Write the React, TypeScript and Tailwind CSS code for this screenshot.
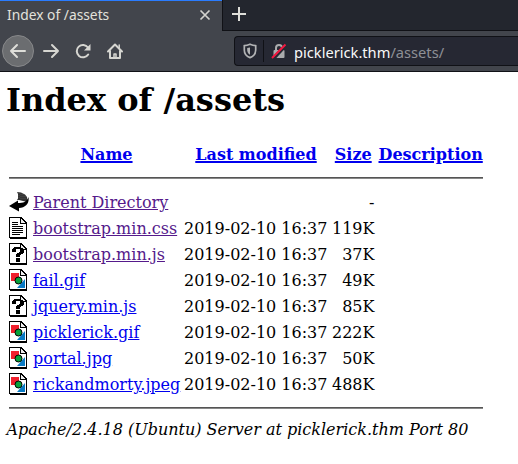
import React from "react";

type Kind = "back" | "text" | "unknown" | "image";

const files: { kind: Kind; name: string; date: string; size: string; visited?: boolean }[] = [
  { kind: "back", name: "Parent Directory", date: "", size: "-", visited: true },
  { kind: "text", name: "bootstrap.min.css", date: "2019-02-10 16:37", size: "119K", visited: true },
  { kind: "unknown", name: "bootstrap.min.js", date: "2019-02-10 16:37", size: "37K", visited: true },
  { kind: "image", name: "fail.gif", date: "2019-02-10 16:37", size: "49K" },
  { kind: "unknown", name: "jquery.min.js", date: "2019-02-10 16:37", size: "85K" },
  { kind: "image", name: "picklerick.gif", date: "2019-02-10 16:37", size: "222K" },
  { kind: "image", name: "portal.jpg", date: "2019-02-10 16:37", size: "50K" },
  { kind: "image", name: "rickandmorty.jpeg", date: "2019-02-10 16:37", size: "488K" },
];

function FileIcon({ kind }: { kind: Kind }) {
  if (kind === "back") {
    return (
      <svg width="20" height="22" viewBox="0 0 20 22" className="block">
        <path d="M8 1L12 1.5L16 3.5L18 6L18.5 9L18 11L10 9L8 9L9 7.5V3Z" fill="#333" />
        <path d="M10 2v6M12 3v5M14 3v5M16 5v3" stroke="#666" strokeWidth=".5" strokeDasharray="1 1" />
        <path d="M19.5 6C20.5 12 17 16.5 10 17V20.5L0 15L9 9.5V12C14 12 18 11 19.5 6Z" fill="#000" />
      </svg>
    );
  }
  return (
    <svg width="20" height="22" viewBox="0 0 20 22" className="block" shapeRendering="crispEdges">
      <path d="M0 0H12L18 6V22H1V21H0Z" fill="#000" />
      <path d="M1 1H12V6H17V20H1Z" fill="#fff" />
      <path d="M11 1h1v5h5v1h-6z" fill="#000" />
      <path d="M12 2h1v1h1v1h1v1h1v1h-4z" fill="#eee" />
      {kind === "text" && (
        <path d="M3 5h6M3 7h6M3 9h11M3 11h11M3 13h11M3 15h11M3 17h8" transform="translate(0 .5)" stroke="#000" />
      )}
      {kind === "unknown" && (
        <path d="M5 4h7v1h2v1h1v4h-1v1h-2v1h-1v2H7v-3h1v-1h2V9h1V6H7v3H3V6h1V5h1zM7 15h4v4H7z" fill="#000" />
      )}
      {kind === "image" && (
        <g shapeRendering="auto">
          <path d="M2 4h8v8H2z" fill="#f0202d" />
          <path d="M16 10v9H8z" fill="#087ac4" />
          <circle cx="9.5" cy="11.5" r="3.5" fill="#08a13b" stroke="#000" strokeWidth="1" />
        </g>
      )}
    </svg>
  );
}

function Chrome() {
  return (
    <header className="h-[72px] bg-[#42454c] font-['Noto_Sans',sans-serif] text-[14.6px]">
      <div className="flex h-[31px]">
        <div className="flex w-[222px] items-start border-t border-[#2a7cff] pl-[7px] pr-[11px] text-[#e2e2dd]">
          <span className="grow text-[13.8px] leading-[28px]">Index of /assets</span>
          <svg className="mt-2" width="12" height="12" viewBox="0 0 12 12" stroke="#d3d3ce" strokeWidth="1.7"><path d="M1.5 1.5l9 9M10.5 1.5l-9 9" /></svg>
        </div>
        <div className="grow border-b border-l border-[#101116] bg-[#23262e] pl-[9px] pt-[7px]">
          <svg width="14" height="14" viewBox="0 0 14 14" stroke="#deded9" strokeWidth="2"><path d="M7 0v14M0 7h14" /></svg>
        </div>
      </div>
      <div className="flex h-[41px] items-center border-b border-[#101116] pl-[2px]">
        <div className="flex size-8 items-center justify-center rounded-full border border-[#87888a] bg-[#6b6d70]">
          <svg width="18" height="16" viewBox="0 0 18 16" fill="none" stroke="#deded9" strokeWidth="2" strokeLinecap="round" strokeLinejoin="round"><path d="M16 8H2M8 2L2 8l6 6" /></svg>
        </div>
        <svg className="ml-2" width="18" height="16" viewBox="0 0 18 16" fill="none" stroke="#d6d6d1" strokeWidth="2" strokeLinecap="round" strokeLinejoin="round"><path d="M2 8h14M10 2l6 6-6 6" /></svg>
        <svg className="ml-[15px]" width="17" height="16" viewBox="0 0 17 16" fill="none" stroke="#d6d6d1" strokeWidth="2" strokeLinecap="round"><path d="M13.2 11.5A6.2 6.2 0 1 1 13 4.5" /><path d="M15.5 1v6.5H9z" fill="#d6d6d1" stroke="none" /></svg>
        <svg className="ml-[14px]" width="18" height="17" viewBox="0 0 18 17" fill="none" stroke="#d6d6d1" strokeWidth="2" strokeLinejoin="round" strokeLinecap="round"><path d="M2 8.5L9 1.5l7 7M4 7.5V15h10V7.5" /><path d="M8 15v-4h2v4" strokeWidth="1.5" /><path d="M13.2 2v3" strokeWidth="1.5" /></svg>
        <div className="ml-[110px] flex h-[30px] grow items-center rounded-l-[4px] border border-r-0 border-[#101116] bg-[#262833] pl-[8px]">
          <svg width="14" height="16" viewBox="0 0 14 16" fill="none" stroke="#b2b3b5" strokeWidth="1.7"><path d="M1.3 2.7Q4 2.4 7 1.2Q10 2.4 12.7 2.7V7C12.7 11 10 13.5 7 14.6C4 13.5 1.3 11 1.3 7Z" /><path d="M7 4.5C6 4.8 5 5 4.2 5.1V7.5C4.4 9.5 5.4 10.8 7 11.7Z" fill="#b2b3b5" stroke="none" /></svg>
          <div className="ml-[6px] h-[22px] w-px bg-[#101116]" />
          <svg className="ml-[7px]" width="16" height="17" viewBox="0 0 16 17" fill="none"><path d="M5 8V5a3 3 0 0 1 6 0v3" stroke="#aaabad" strokeWidth="2" /><rect x="2.5" y="7" width="11" height="8" rx="1" fill="#aaabad" /><path d="M2 16L15 2" stroke="#262833" strokeWidth="3.6" /><path d="M1 15L14.5 1.5" stroke="#f51840" strokeWidth="2" /></svg>
          <span className="ml-[7px] whitespace-nowrap pt-px text-[14.67px] text-[#f9f9fa]">picklerick.thm<span className="text-[#8e9096]">/assets/</span></span>
        </div>
      </div>
    </header>
  );
}

function Rule() {
  return <div className="ml-[9px] h-[2px] w-[474px] border-t border-[#555] bg-[#888]" />;
}

export default function App() {
  const link = "underline text-[#0000ee]";
  const heading = "underline decoration-2 text-[#0000ee]";
  return (
    <div className="h-[464px] w-[518px] overflow-hidden bg-white text-black">
      <Chrome />
      <main className="font-['DejaVu_Serif',serif] text-[16px] leading-[26px]">
        <h1 className="ml-[6px] h-[70px] pt-[9px] text-[32px] font-bold leading-[38px]">Index of /assets</h1>
        <div className="flex h-[35px] whitespace-nowrap font-bold">
          <div className="ml-[33px] w-[147px] text-center"><a className={heading}>Name</a></div>
          <div className="ml-1 w-[144px] text-center"><a className={heading}>Last modified</a></div>
          <div className="ml-1 flex w-[42.5px] justify-center"><a className={heading}>Size</a></div>
          <div className="ml-1"><a className={heading}>Description</a></div>
        </div>
        <Rule />
        <div className="h-[228px] pt-[11px]">
          {files.map((f) => (
            <div key={f.name} className="flex h-[26px] whitespace-nowrap">
              <div className="ml-[9px] w-5 pt-px"><FileIcon kind={f.kind} /></div>
              <div className="ml-1 w-[147px]"><a className={f.visited ? "underline text-[#551a8b]" : link}>{f.name}</a></div>
              <div className="ml-1 w-[144.3px]">{f.date}</div>
              <div className="ml-1 flex w-[42.2px] justify-end">{f.size}</div>
            </div>
          ))}
        </div>
        <Rule />
        <address className="ml-[6.5px] pt-[8px] italic">Apache/2.4.18 (Ubuntu) Server at picklerick.thm Port 80</address>
      </main>
    </div>
  );
}
